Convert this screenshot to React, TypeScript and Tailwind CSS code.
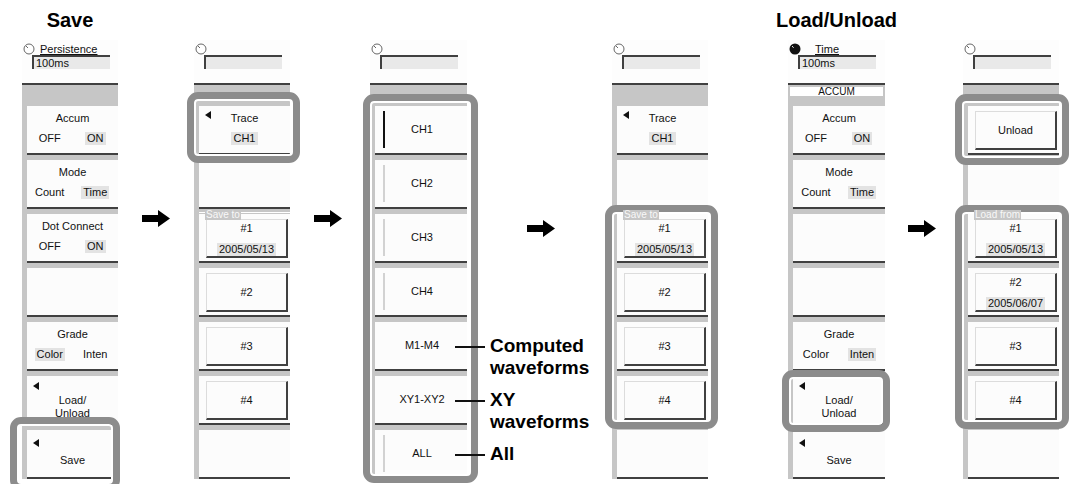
import React from "react";

type Child = React.ReactNode;

function Knob({ filled }: { filled?: boolean }) {
  return filled ? (
    <svg width="12" height="12" viewBox="0 0 12 12" className="shrink-0">
      <circle cx="6" cy="6" r="5.5" fill="#111" />
      <path d="M3 3.2 L4.6 4.6" stroke="#fff" strokeWidth="1" />
    </svg>
  ) : (
    <svg width="12" height="12" viewBox="0 0 12 12" className="shrink-0">
      <circle cx="6" cy="6" r="5" fill="#fff" stroke="#666" strokeWidth="1" />
      <path d="M3 3 L5 5" stroke="#666" strokeWidth="1" />
    </svg>
  );
}

function TopBox({ label, value, filled, labelCls = "" }: { label?: string; value?: string; filled?: boolean; labelCls?: string }) {
  return (
    <div className="h-[45px] shrink-0 bg-[#fdfdfd] border-b-2 border-[#404040] pt-[2px]">
      <div className="h-[13px] flex items-center pl-[1px]">
        <Knob filled={filled} />
        {label && <span className={`text-[11px] leading-[12px] underline ${labelCls}`}>{label}</span>}
      </div>
      <div className="ml-[10px] w-[78px] h-[14px] border-t-2 border-l-2 border-[#404040] bg-[#e9e9e9] text-[11px] leading-[12px] pl-[2px]">
        {value}
      </div>
    </div>
  );
}

function Item({ children, className = "" }: { children?: Child; className?: string }) {
  return <div className={`relative h-[49px] shrink-0 bg-[#fcfcfc] border-b-2 border-[#404040] ${className}`}>{children}</div>;
}

function Tri({ top }: { top: string }) {
  return (
    <svg width="6" height="8" viewBox="0 0 6 8" className={`absolute left-[6px] ${top}`}>
      <polygon points="6,0 6,8 0,4" fill="#111" />
    </svg>
  );
}

function V({ children, sel }: { children: Child; sel?: boolean }) {
  return (
    <div className="text-center">
      <span className={`inline-block px-[2px] leading-[13px] ${sel ? "bg-[#e3e3e3]" : ""}`}>{children}</span>
    </div>
  );
}

function Toggle({ title, a, b, sel }: { title: string; a: string; b: string; sel: number }) {
  return (
    <Item>
      <div className="pt-[5px] leading-[14px] text-center">{title}</div>
      <div className="mt-[6px] grid grid-cols-2 leading-[14px]">
        <V sel={sel === 0}>{a}</V>
        <V sel={sel === 1}>{b}</V>
      </div>
    </Item>
  );
}

function LoadItem() {
  return (
    <Item>
      <Tri top="top-[6px]" />
      <div className="pt-[18px] leading-[13px] text-center">
        <div>Load/</div>
        <div>Unload</div>
      </div>
    </Item>
  );
}

function SaveItem() {
  return (
    <Item>
      <Tri top="top-[9px]" />
      <div className="pt-[23px] leading-[14px] text-center">Save</div>
    </Item>
  );
}

function TraceItem() {
  return (
    <Item>
      <Tri top="top-[5px]" />
      <div className="pt-[5px] leading-[14px] text-center">Trace</div>
      <div className="mt-[6px] leading-[14px]">
        <V sel>CH1</V>
      </div>
    </Item>
  );
}

function Slot({ children }: { children?: Child }) {
  return (
    <Item className="bg-[#f1f1f1] pt-[5px] pb-[3px] pl-[7px] pr-[2px]">
      <div className="h-full bg-[#fcfcfc] border-t border-l border-r-2 border-b-2 border-t-[#dcdcdc] border-l-[#dcdcdc] border-r-[#404040] border-b-[#404040] flex flex-col items-center justify-center gap-[7px] leading-[14px]">
        {children}
      </div>
    </Item>
  );
}

function Group({ label, children }: { label: string; children: Child }) {
  return (
    <div className="relative flex flex-col gap-[5px]">
      <div className="absolute left-0 right-0 -top-[2px] h-px bg-white" />
      <span className="absolute -top-[4px] left-[6px] z-[11] bg-[#c6c6c6] px-[1px] text-[10px] leading-[10px] text-[#f8f8f8]">{label}</span>
      {children}
    </div>
  );
}

function HL({ className }: { className: string }) {
  return (
    <div
      className={`pointer-events-none absolute z-10 rounded-[11px] border-[7px] border-[#8c8c8c] shadow-[inset_0_0_0_2px_#ffffff] ${className}`}
    />
  );
}

function ChItem({ label, bar, children }: { label: string; bar: "dark" | "light" | "none"; children?: Child }) {
  const barCls = bar === "dark" ? "bg-[#111]" : bar === "light" ? "bg-[#d2d2d2]" : "bg-transparent";
  return (
    <Item>
      <div className="h-full flex items-stretch py-[5px] pl-[8px]">
        <div className={`w-[2px] ${barCls}`} />
        <div className="flex-1 flex items-center justify-center pr-[8px]">{label}</div>
      </div>
      {children}
    </Item>
  );
}

function Note({ lines }: { lines: string[] }) {
  return (
    <div className="absolute left-[80px] top-[13px] z-20 flex items-start">
      <div className="mt-[11px] w-[30px] h-[2px] bg-[#111] shrink-0" />
      <div className="ml-[5px] text-[19px] leading-[22px] font-bold whitespace-nowrap text-black">
        {lines.map((l) => (
          <div key={l}>{l}</div>
        ))}
      </div>
    </div>
  );
}

function Arrow({ pt }: { pt: string }) {
  return (
    <div className={`shrink-0 w-[28px] ${pt}`}>
      <svg width="28" height="17" viewBox="0 0 28 17">
        <polygon points="0,5 16,5 16,0 28,8.5 16,17 16,12 0,12" fill="#000" />
      </svg>
    </div>
  );
}

function Col({ title, className, children }: { title?: string; className: string; children: Child }) {
  return (
    <div className={`flex flex-col shrink-0 ${className}`}>
      <div className="h-[40px] pt-[9px] flex justify-center whitespace-nowrap text-[20px] leading-[23px] font-bold text-black">
        {title}
      </div>
      {children}
    </div>
  );
}

function Panel({ top, band, children }: { top: Child; band?: Child; children: Child }) {
  return (
    <div className="flex flex-col bg-[#c6c6c6] h-[439px]">
      {top}
      {band ?? <div className="h-[21px] shrink-0" />}
      <div className="flex flex-col gap-[5px] pl-[5px]">{children}</div>
    </div>
  );
}

export default function App() {
  return (
    <div className="w-[1069px] h-[484px] bg-white overflow-hidden flex font-['Liberation_Sans',Arial,sans-serif] text-[11px] text-[#111]">
      {/* Panel 1 */}
      <Col title="Save" className="ml-[22px] w-[96px]">
        <Panel top={<TopBox label="Persistence" value="100ms" labelCls="ml-[5px]" />}>
          <Toggle title="Accum" a="OFF" b="ON" sel={1} />
          <Toggle title="Mode" a="Count" b="Time" sel={1} />
          <Toggle title="Dot Connect" a="OFF" b="ON" sel={1} />
          <Item />
          <Toggle title="Grade" a="Color" b="Inten" sel={0} />
          <LoadItem />
          <div className="relative">
            <SaveItem />
            <HL className="-left-[17px] -right-[2px] -top-[13px] -bottom-[12px]" />
          </div>
        </Panel>
      </Col>

      <Arrow pt="ml-[24px] pt-[210px]" />

      {/* Panel 2 */}
      <Col className="ml-[24px] w-[96px]">
        <Panel top={<TopBox />}>
          <div className="relative">
            <TraceItem />
            <HL className="-left-[12px] -right-[10px] -top-[14px] -bottom-[8px]" />
          </div>
          <Item />
          <Group label="Save to">
            <Slot>
              <div>#1</div>
              <V sel>2005/05/13</V>
            </Slot>
            <Slot>#2</Slot>
            <Slot>#3</Slot>
            <Slot>#4</Slot>
          </Group>
          <Item />
        </Panel>
      </Col>

      <Arrow pt="ml-[24px] pt-[210px]" />

      {/* Panel 3 */}
      <Col className="ml-[28px] w-[97px]">
        <Panel top={<TopBox />}>
          <div className="relative flex flex-col gap-[5px]">
            <ChItem label="CH1" bar="dark" />
            <ChItem label="CH2" bar="light" />
            <ChItem label="CH3" bar="light" />
            <ChItem label="CH4" bar="light" />
            <ChItem label="M1-M4" bar="none">
              <Note lines={["Computed", "waveforms"]} />
            </ChItem>
            <ChItem label="XY1-XY2" bar="none">
              <Note lines={["XY", "waveforms"]} />
            </ChItem>
            <ChItem label="ALL" bar="light">
              <Note lines={["All"]} />
            </ChItem>
            <HL className="-left-[12px] -right-[11px] -top-[12px] -bottom-[4px]" />
          </div>
        </Panel>
      </Col>

      <Arrow pt="ml-[60px] pt-[220px]" />

      {/* Panel 4 */}
      <Col className="ml-[57px] w-[96px]">
        <Panel top={<TopBox />}>
          <TraceItem />
          <Item />
          <div className="relative">
            <Group label="Save to">
              <Slot>
                <div>#1</div>
                <V sel>2005/05/13</V>
              </Slot>
              <Slot>#2</Slot>
              <Slot>#3</Slot>
              <Slot>#4</Slot>
            </Group>
            <HL className="-left-[12px] -right-[10px] -top-[9px] -bottom-[4px]" />
          </div>
          <Item />
        </Panel>
      </Col>

      {/* Panel 5 */}
      <Col title="Load/Unload" className="ml-[80px] w-[97px]">
        <Panel
          top={<TopBox label="Time" value="100ms" filled labelCls="ml-[14px]" />}
          band={
            <div className="h-[21px] shrink-0 pt-[2px] px-[2px]">
              <div className="h-[9px] bg-white text-[10px] leading-[9px] text-center">ACCUM</div>
            </div>
          }
        >
          <Toggle title="Accum" a="OFF" b="ON" sel={1} />
          <Toggle title="Mode" a="Count" b="Time" sel={1} />
          <Item />
          <Item />
          <Toggle title="Grade" a="Color" b="Inten" sel={1} />
          <div className="relative">
            <LoadItem />
            <HL className="-left-[11px] -right-[5px] -top-[6px] -bottom-[7px]" />
          </div>
          <SaveItem />
        </Panel>
      </Col>

      <Arrow pt="ml-[23px] pt-[220px]" />

      {/* Panel 6 */}
      <Col className="ml-[27px] w-[96px]">
        <Panel top={<TopBox />}>
          <div className="relative">
            <Slot>Unload</Slot>
            <HL className="-left-[13px] -right-[10px] -top-[12px] -bottom-[10px]" />
          </div>
          <Item />
          <div className="relative">
            <Group label="Load from">
              <Slot>
                <div>#1</div>
                <V sel>2005/05/13</V>
              </Slot>
              <Slot>
                <div>#2</div>
                <V sel>2005/06/07</V>
              </Slot>
              <Slot>#3</Slot>
              <Slot>#4</Slot>
            </Group>
            <HL className="-left-[13px] -right-[10px] -top-[9px] -bottom-[4px]" />
          </div>
          <Item />
        </Panel>
      </Col>
    </div>
  );
}
